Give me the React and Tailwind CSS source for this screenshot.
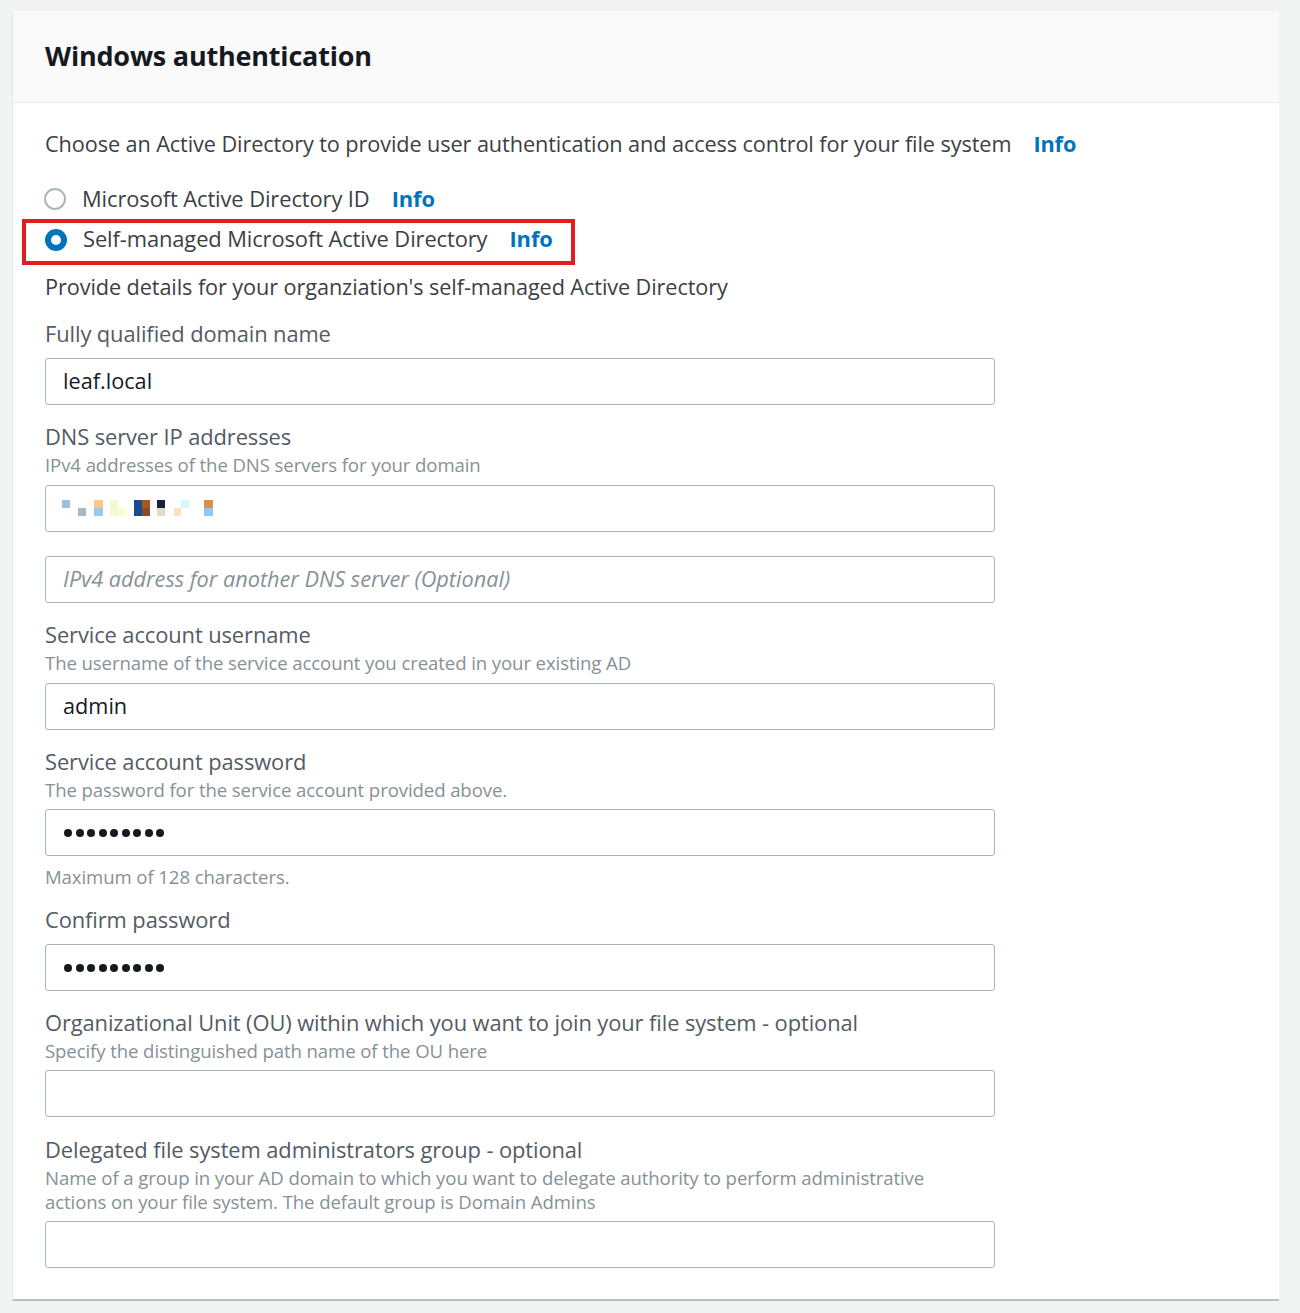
import React from "react";

const font = { fontFamily: '"Open Sans", "Liberation Sans", sans-serif' };

function Label({ children }) {
  return <div className="text-[21.9px] leading-[28px] text-[#545b64] tracking-[-0.1px]">{children}</div>;
}
function Desc({ children, className = "" }) {
  return <div className={"mt-[2px] text-[18.6px] leading-[24px] text-[#879196] tracking-[-0.1px] " + className}>{children}</div>;
}
function Input({ children, className = "" }) {
  return (
    <div className={"h-[47px] w-[950px] rounded-[3px] border border-[#aab7b8] bg-white flex items-center pl-[17px] text-[21.7px] text-[#16191f] " + className}>
      {children}
    </div>
  );
}
function Dots() {
  return (
    <div className="flex gap-[3.5px] pl-[1px]">
      {Array.from({ length: 9 }).map((_, i) => (
        <span key={i} className="block w-[8px] h-[8px] rounded-full bg-[#16191f]" />
      ))}
    </div>
  );
}
function Pixels() {
  const b = [
    [16, 14, 8, 8, "#9bbfdc"],
    [32, 22, 8, 8, "#a9b6c6"],
    [48, 14, 9, 8, "#fbc88a"],
    [48, 22, 9, 8, "#8fcdf5"],
    [64, 14, 8, 16, "#f5f8d0"],
    [72, 22, 8, 8, "#fdfbd0"],
    [88, 14, 8, 16, "#1a4a8f"],
    [96, 14, 8, 8, "#a5591f"],
    [96, 22, 8, 8, "#8b4a26"],
    [111, 14, 8, 8, "#1c2040"],
    [111, 22, 8, 8, "#e0dcc0"],
    [128, 22, 7, 8, "#fde0bc"],
    [135, 14, 8, 8, "#cffbff"],
    [158, 14, 9, 8, "#d8914a"],
    [158, 22, 9, 8, "#8cc8f8"],
  ];
  return (
    <div className="relative w-full h-full">
      {b.map(([x, y, w, h, c], i) => (
        <span key={i} className="absolute block" style={{ left: x - 17, top: y, width: w, height: h, background: c }} />
      ))}
    </div>
  );
}

export default function App() {
  return (
    <div style={font} className="min-h-[1313px] bg-[#f2f3f3] pt-[11px] pl-[12px] pr-[21px] pb-[11px]">
      <div className="bg-white border-l border-[#e3e6e6] border-b-[2px] border-b-[#b7c0c1]">
        <div className="h-[92px] bg-[#fafafa] border-b border-[#eaeded] flex items-center pl-[32px]">
          <h1 className="text-[27px] font-bold text-[#16191f] tracking-[-0.2px]">Windows authentication</h1>
        </div>
        <div className="pl-[32px] pt-[27px] pb-[31px]">
          <div className="flex items-center text-[21.7px] leading-[28px] text-[#3b3f44] tracking-[-0.1px]">
            <span>Choose an Active Directory to provide user authentication and access control for your file system</span>
            <span className="ml-[22px] font-bold text-[#0073bb]">Info</span>
          </div>
          <div className="mt-[27px] flex items-center h-[28px] text-[21.9px] text-[#3b3f44] tracking-[-0.1px]">
            <span className="w-[22px] h-[22px] rounded-full border-[2px] border-[#aab7b8] ml-[-1px] mr-[16px]" />
            <span>Microsoft Active Directory ID</span>
            <span className="ml-[22px] font-bold text-[#0073bb]">Info</span>
          </div>
          <div className="mt-[6px] ml-[-23px] w-[553px] h-[46px] border-[4px] border-[#e31b23] flex items-center pl-[19px] pb-[5px] text-[21.9px] text-[#3b3f44] tracking-[-0.1px]">
            <span className="w-[22px] h-[22px] rounded-full border-[6px] border-[#0073bb] bg-white mr-[16px]" />
            <span>Self-managed Microsoft Active Directory</span>
            <span className="ml-[22px] font-bold text-[#0073bb]">Info</span>
          </div>
          <div className="mt-[8px] text-[21.7px] leading-[28px] text-[#3b3f44] tracking-[-0.1px]">Provide details for your organziation's self-managed Active Directory</div>

          <div className="mt-[19px]"><Label>Fully qualified domain name</Label></div>
          <Input className="mt-[10px]">leaf.local</Input>

          <div className="mt-[18px]"><Label>DNS server IP addresses</Label></div>
          <Desc>IPv4 addresses of the DNS servers for your domain</Desc>
          <Input className="mt-[8px]"><Pixels /></Input>
          <Input className="mt-[24px] italic text-[#879196]">IPv4 address for another DNS server (Optional)</Input>

          <div className="mt-[18px]"><Label>Service account username</Label></div>
          <Desc>The username of the service account you created in your existing AD</Desc>
          <Input className="mt-[8px]">admin</Input>

          <div className="mt-[18px]"><Label>Service account password</Label></div>
          <Desc>The password for the service account provided above.</Desc>
          <Input className="mt-[7px]"><Dots /></Input>
          <Desc className="mt-[9px]">Maximum of 128 characters.</Desc>

          <div className="mt-[17px]"><Label>Confirm password</Label></div>
          <Input className="mt-[10px]"><Dots /></Input>

          <div className="mt-[18px]"><Label>Organizational Unit (OU) within which you want to join your file system - optional</Label></div>
          <Desc>Specify the distinguished path name of the OU here</Desc>
          <Input className="mt-[7px]"></Input>

          <div className="mt-[19px]"><Label>Delegated file system administrators group - optional</Label></div>
          <div className="w-[905px]">
            <Desc className="leading-[23.5px]">Name of a group in your AD domain to which you want to delegate authority to perform administrative actions on your file system. The default group is Domain Admins</Desc>
          </div>
          <Input className="mt-[7px]"></Input>
        </div>
      </div>
    </div>
  );
}
